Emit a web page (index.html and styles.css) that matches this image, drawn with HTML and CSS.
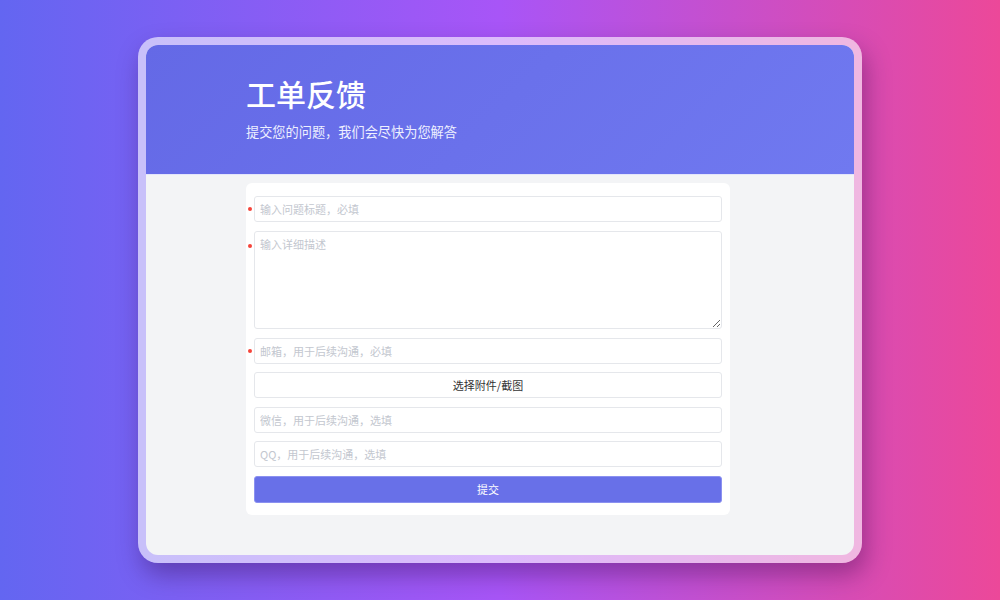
FILE: index.html
```html
<!DOCTYPE html>
<html lang="zh-CN">
<head>
    <meta charset="UTF-8">
    <meta name="viewport" content="width=device-width, initial-scale=1.0">
    <title>工单反馈</title>
    <link rel="stylesheet" href="styles.css">
</head>
<body>
    <div class="frame">
        <div class="screen">
            <header class="top">
                <div class="wrap">
                    <h1>工单反馈</h1>
                    <p>提交您的问题，我们会尽快为您解答</p>
                </div>
            </header>
            <div class="wrap">
                <form class="card" id="ticket">
                    <div class="row required">
                        <input type="text" name="title" placeholder="输入问题标题，必填">
                    </div>
                    <div class="row required tall">
                        <textarea name="content" placeholder="输入详细描述"></textarea>
                    </div>
                    <div class="row required">
                        <input type="email" name="email" placeholder="邮箱，用于后续沟通，必填">
                    </div>
                    <div class="row">
                        <button type="button" class="attach">选择附件/截图</button>
                    </div>
                    <div class="row">
                        <input type="text" name="wechat" placeholder="微信，用于后续沟通，选填">
                    </div>
                    <div class="row">
                        <input type="text" name="qq" placeholder="QQ，用于后续沟通，选填">
                    </div>
                    <div class="row">
                        <button type="submit" class="submit">提交</button>
                    </div>
                </form>
            </div>
        </div>
    </div>
</body>
</html>
```

FILE: styles.css
```css
/* page */
body {
    margin: 0;
    height: 600px;
    display: flex;
    align-items: center;
    justify-content: center;
    font-family: "Noto Sans CJK SC", "Noto Sans", sans-serif;
    background: linear-gradient(90deg, #6366f1 0%, #a855f7 50%, #ec4899 100%);
    overflow: hidden;
}

.frame {
    width: 708px;
    height: 510px;
    padding: 8px;
    border-radius: 20px;
    background: rgba(255, 255, 255, 0.6);
    box-shadow: 4px 12px 24px rgba(40, 0, 60, 0.35);
}

.screen {
    height: 100%;
    border-radius: 12px;
    overflow: hidden;
    background: #f3f4f6;
}

.wrap {
    width: 508px;
    margin: 0 auto;
}

/* header */
.top {
    height: 130px;
    border-bottom: 1px solid #e3e5fb;
    background: linear-gradient(135deg, #6469e6 0%, #7079f0 100%);
    color: white;
    padding-top: 28px;
    box-sizing: border-box;
}

.top h1 {
    margin: 0 0 9px;
    font-size: 30px;
    line-height: 40px;
    font-weight: 500;
}

.top p {
    margin: 0;
    font-size: 13.2px;
    line-height: 20px;
    color: #eef0ff;
}

/* form card */
.card {
    width: 484px;
    margin-top: 8px;
    padding: 13px 8px 12px;
    box-sizing: border-box;
    background: white;
    border-radius: 6px;
    display: flex;
    flex-direction: column;
    gap: 8.5px;
}

.row {
    position: relative;
    display: flex;
}

/* red dot for required fields */
.row.required::before {
    content: "";
    position: absolute;
    left: -6px;
    top: 11px;
    width: 4px;
    height: 4px;
    border-radius: 50%;
    background: #f5443a;
}

.row.tall::before {
    top: 13px;
}

.card input,
.card textarea {
    flex: 1;
    height: 26px;
    padding: 0 5px;
    border: 1px solid #e5e7eb;
    border-radius: 3px;
    box-sizing: border-box;
    font-family: inherit;
    font-size: 11px;
    color: #333;
    outline: none;
}

.card textarea {
    height: 98.5px;
    padding: 4px 5px;
    line-height: 16px;
}

.card input::placeholder,
.card textarea::placeholder {
    color: #c3c7cf;
}

.attach {
    flex: 1;
    height: 26px;
    border: 1px solid #e5e7eb;
    border-radius: 3px;
    background: white;
    font-family: inherit;
    font-size: 11px;
    color: #333;
    cursor: pointer;
}

.submit {
    flex: 1;
    height: 27px;
    border: 1px solid #8b91f0;
    border-radius: 3px;
    background: #6870e8;
    font-family: inherit;
    font-size: 11px;
    color: white;
    cursor: pointer;
}
```
